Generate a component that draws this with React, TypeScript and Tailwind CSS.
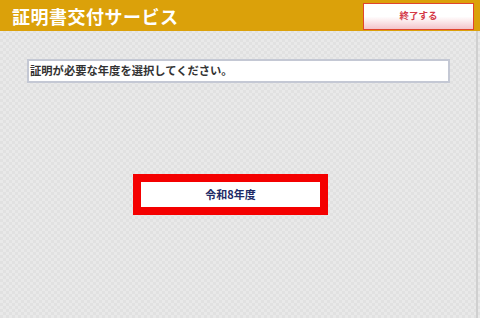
export default function App() {
  return (
    <div
      className="w-[480px] h-[318px] flex flex-col overflow-hidden bg-[#e5e5e5] bg-[repeating-conic-gradient(#e1e1e1_0%_25%,#e9e9e9_0%_50%)] bg-[length:6px_6px]"
      style={{ fontFamily: '"Noto Sans CJK JP", "Noto Sans", sans-serif' }}
    >
      <header className="h-[31px] shrink-0 bg-[#dba10a] flex items-center justify-between pl-[12px] pr-[6px]">
        <h1 className="text-white font-bold text-[18px] leading-none tracking-[0.5px]">証明書交付サービス</h1>
        <button className="w-[111px] h-[27px] mt-[1px] border border-[#e0452e] bg-gradient-to-b from-white via-white to-[#f3c4cb] text-[#d43a48] text-[9.5px] font-bold leading-none flex items-center justify-center">
          終了する
        </button>
      </header>

      <div className="flex-1 flex border-r-2 border-[#d0d0d0] mr-[2px]">
        <main className="flex-1 flex flex-col">
          <div className="mt-[28px] ml-[27px] w-[423px] h-[24px] bg-white border-2 border-[#c4c8d4] flex items-center pl-[1px]">
            <span className="text-[11.3px] font-bold text-[#333] leading-none">証明が必要な年度を選択してください。</span>
          </div>

          <div className="mt-[91px] ml-[133px] w-[195px] h-[41px] border-[8px] border-[#f40000] bg-white flex items-center justify-center">
            <span className="text-[11px] font-bold text-[#1d2a66] leading-none">令和8年度</span>
          </div>
        </main>
      </div>
    </div>
  )
}
